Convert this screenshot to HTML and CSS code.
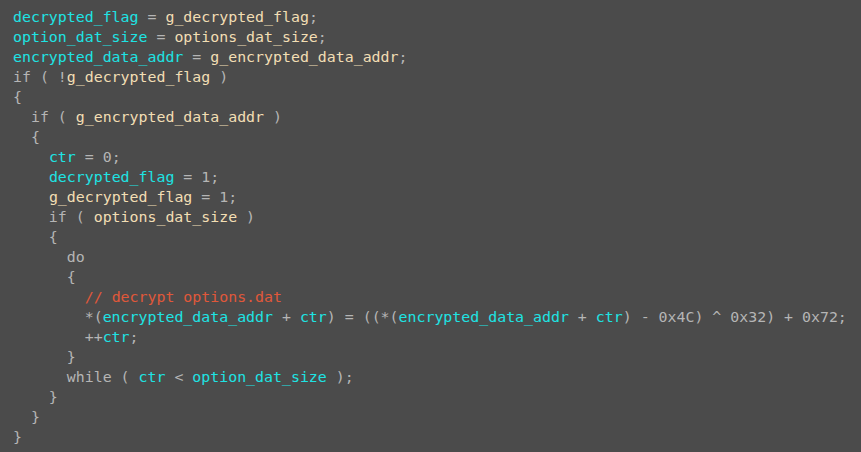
FILE: index.html
```html
<!DOCTYPE html>
<html>
<head>
<meta charset="utf-8">
<link rel="stylesheet" href="styles.css">
</head>
<body>
<div class="code">
<div class="ln"><span class="v">decrypted_flag</span> = <span class="g">g_decrypted_flag</span>;</div>
<div class="ln"><span class="v">option_dat_size</span> = <span class="g">options_dat_size</span>;</div>
<div class="ln"><span class="v">encrypted_data_addr</span> = <span class="g">g_encrypted_data_addr</span>;</div>
<div class="ln">if ( !<span class="g">g_decrypted_flag</span> )</div>
<div class="ln">{</div>
<div class="ln">  if ( <span class="g">g_encrypted_data_addr</span> )</div>
<div class="ln">  {</div>
<div class="ln">    <span class="v">ctr</span> = 0;</div>
<div class="ln">    <span class="v">decrypted_flag</span> = 1;</div>
<div class="ln">    <span class="g">g_decrypted_flag</span> = 1;</div>
<div class="ln">    if ( <span class="g">options_dat_size</span> )</div>
<div class="ln">    {</div>
<div class="ln">      do</div>
<div class="ln">      {</div>
<div class="ln">        <span class="c">// decrypt options.dat</span></div>
<div class="ln">        *(<span class="v">encrypted_data_addr</span> + <span class="v">ctr</span>) = ((*(<span class="v">encrypted_data_addr</span> + <span class="v">ctr</span>) - 0x4C) ^ 0x32) + 0x72;</div>
<div class="ln">        ++<span class="v">ctr</span>;</div>
<div class="ln">      }</div>
<div class="ln">      while ( <span class="v">ctr</span> &lt; <span class="v">option_dat_size</span> );</div>
<div class="ln">    }</div>
<div class="ln">  }</div>
<div class="ln">}</div>
</div>
</body>
</html>
```
FILE: styles.css
```css
html, body {
  margin: 0;
  padding: 0;
  background: #4b4b4b;
  height: 100%;
  overflow: hidden;
}
body {
  padding: 7px 0 0 13px;
  box-sizing: border-box;
}
.code {
  font-family: "DejaVu Sans Mono", "Liberation Mono", monospace;
  font-size: 14.9px;
  color: #b5b5b5;
}
.ln {
  white-space: pre;
  height: 20px;
  line-height: 20px;
}
.v { color: #1ee3e3; }
.g { color: #f2deb4; }
.c { color: #e0583a; }
```
